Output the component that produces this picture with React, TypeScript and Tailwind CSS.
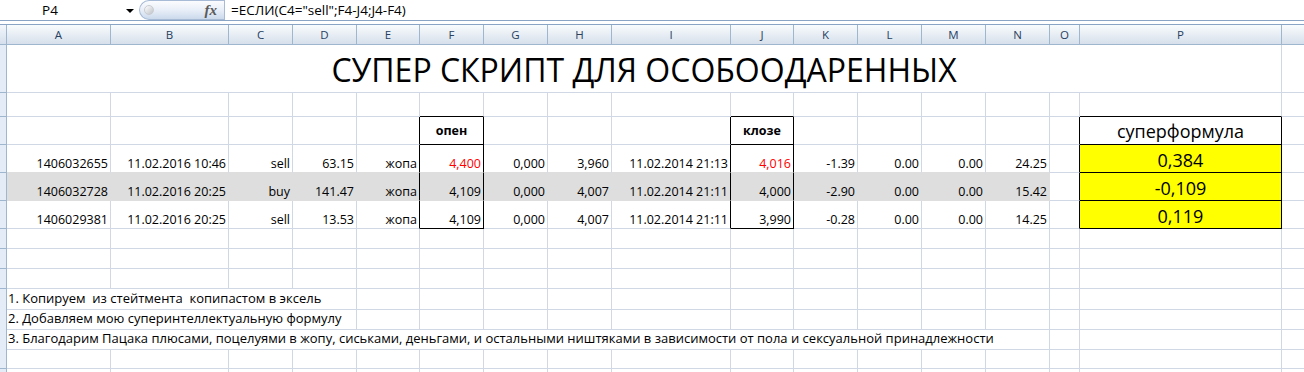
import type { ReactNode } from 'react'
import { twJoin, twMerge } from 'tailwind-merge'

const GRID =
  'grid grid-cols-[7px_104px_118px_64px_64px_63px_64px_64px_64px_119px_63px_64px_64px_64px_64px_30px_202px_64px]'

const LETTERS = ['A', 'B', 'C', 'D', 'E', 'F', 'G', 'H', 'I', 'J', 'K', 'L', 'M', 'N', 'O', 'P', '']

const DATA = [
  {
    cells: ['1406032655', '11.02.2016 10:46', 'sell', '63.15', 'жопа', '4,400', '0,000', '3,960', '11.02.2014 21:13', '4,016', '-1.39', '0.00', '0.00', '24.25'],
    red: true,
    result: '0,384',
  },
  {
    cells: ['1406032728', '11.02.2016 20:25', 'buy', '141.47', 'жопа', '4,109', '0,000', '4,007', '11.02.2014 21:11', '4,000', '-2.90', '0.00', '0.00', '15.42'],
    grey: true,
    result: '-0,109',
  },
  {
    cells: ['1406029381', '11.02.2016 20:25', 'sell', '13.53', 'жопа', '4,109', '0,000', '4,007', '11.02.2014 21:11', '3,990', '-0.28', '0.00', '0.00', '14.25'],
    last: true,
    result: '0,119',
  },
]

function Cell({ children, className }: { children?: ReactNode; className?: string }) {
  return (
    <div
      className={twMerge(
        'flex min-w-0 items-end justify-end whitespace-pre border-r border-b border-r-[#d0d7e5] border-b-[#d0d7e5] px-[2px] text-[12.5px] leading-[16px] text-black',
        className,
      )}
    >
      {children}
    </div>
  )
}

function Row({ h, children }: { h: string; children: ReactNode }) {
  return (
    <div className={twJoin(GRID, h)}>
      <div className="border-r border-b border-[#9eb6ce] bg-[#e4ecf7]" />
      {children}
    </div>
  )
}

function Blank({ h, extra = {} }: { h: string; extra?: Record<number, string> }) {
  return (
    <Row h={h}>
      {LETTERS.map((_, i) => (
        <Cell key={i} className={extra[i]} />
      ))}
    </Row>
  )
}

function NoteRow({ text, span }: { text: string; span: string }) {
  const rest = span === 'col-span-4' ? 13 : 3
  return (
    <Row h="h-[20px]">
      <Cell className={twJoin(span, 'justify-start pl-[1px] text-[13px]')}>{text}</Cell>
      {Array.from({ length: rest }, (_, i) => (
        <Cell key={i} />
      ))}
    </Row>
  )
}

function FormulaBar() {
  return (
    <div className="flex h-[21px] border-b border-[#8aa4c6] bg-white text-black">
      <div className="flex w-[100px] items-center justify-center text-[13.5px]">P4</div>
      <div className="ml-[26px] mt-[9px] h-0 w-0 border-x-[4px] border-t-[4px] border-x-transparent border-t-black" />
      <div className="ml-[5px] flex h-[20px] w-[85px] items-center rounded-l-full border border-r-0 border-[#a7bbd6] bg-linear-to-b from-[#fbfcfe] via-[#e9eff8] to-[#cbd9ec] pl-[4px] pr-[7px]">
        <div className="h-[10px] w-[10px] rounded-full border border-[#c9ccd1] bg-linear-to-br from-white to-[#bfc3c8]" />
        <span className="ml-auto font-['Liberation_Serif',serif] text-[15px] font-bold italic leading-none text-[#5a5a5a]">
          fx
        </span>
      </div>
      <div className="w-px bg-[#a7bbd6]" />
      <div className="flex items-center pl-[6px] text-[13.5px]">=ЕСЛИ(C4="sell";F4-J4;J4-F4)</div>
    </div>
  )
}

export default function App() {
  return (
    <div className="h-[372px] w-[1304px] overflow-hidden bg-white font-['Open_Sans',sans-serif]">
      <FormulaBar />
      <div className="h-[3px]" />

      <div className={twJoin(GRID, 'h-[21px] border-t border-[#8aa4c6]')}>
        <div className="border-r border-b border-[#9eb6ce] bg-linear-to-b from-[#f3f7fc] to-[#d5dfec]" />
        {LETTERS.map((l, i) => (
          <div
            key={i}
            className="flex items-center justify-center border-r border-b border-[#9eb6ce] bg-linear-to-b from-[#f9fcfd] to-[#d6dfeb] text-[11.5px] text-[#27415f]"
          >
            {l}
          </div>
        ))}
      </div>

      <Row h="h-[48px]">
        <Cell className="col-span-16 justify-center text-[32px] leading-[1.362]">СУПЕР СКРИПТ ДЛЯ ОСОБООДАРЕННЫХ</Cell>
        <Cell />
      </Row>

      <Blank h="h-[24px]" extra={{ 5: 'border-b-black', 9: 'border-b-black', 15: 'border-b-black' }} />

      <Row h="h-[28px]">
        {LETTERS.map((_, i) => {
          if (i === 5 || i === 9)
            return (
              <Cell key={i} className="items-center justify-center border-r-black border-b-black font-bold">
                {i === 5 ? 'опен' : 'клозе'}
              </Cell>
            )
          if (i === 15)
            return (
              <Cell key={i} className="items-center justify-center border-r-black border-b-black text-[18px] leading-[24px]">
                суперформула
              </Cell>
            )
          return <Cell key={i} className={i === 4 || i === 8 || i === 14 ? 'border-r-black' : undefined} />
        })}
      </Row>

      {DATA.map((row, r) => (
        <Row key={r} h="h-[28px]">
          {row.cells.map((v, i) => (
            <Cell
              key={i}
              className={twJoin(
                row.grey && 'bg-[#dedede] border-r-[#dedede] border-b-[#dedede]',
                r === 0 && 'border-b-[#dedede]',
                (i === 4 || i === 5 || i === 8 || i === 9) && 'border-r-black',
                row.last && (i === 5 || i === 9) && 'border-b-black',
                row.red && (i === 5 || i === 9) && 'text-[#ff0000]',
              )}
            >
              {v}
            </Cell>
          ))}
          <Cell className="border-r-black" />
          <Cell className="justify-center border-r-black border-b-black bg-[#ffff00] pb-[2px] text-[18px] leading-[20px]">
            {row.result}
          </Cell>
          <Cell />
        </Row>
      ))}

      <Blank h="h-[20px]" />
      <Blank h="h-[20px]" />
      <Blank h="h-[20px]" />
      <NoteRow span="col-span-4" text="1. Копируем  из стейтмента  копипастом в эксель" />
      <NoteRow span="col-span-4" text="2. Добавляем мою суперинтеллектуальную формулу" />
      <NoteRow
        span="col-span-14"
        text="3. Благодарим Пацака плюсами, поцелуями в жопу, сиськами, деньгами, и остальными ништяками в зависимости от пола и сексуальной принадлежности"
      />
      <Blank h="h-[20px]" />
      <Blank h="h-[20px]" />
    </div>
  )
}
